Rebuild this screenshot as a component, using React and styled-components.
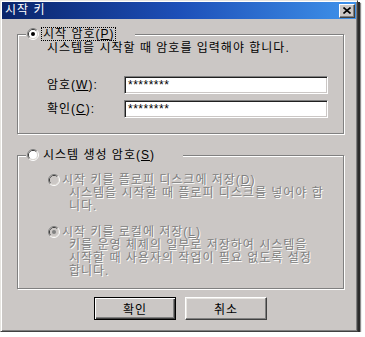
import React from 'react';
import styled, { createGlobalStyle } from 'styled-components';

const FACE = '#cbc7c5';
const FONT = '"Liberation Sans", "Noto Sans CJK KR", "Noto Sans", sans-serif';

const Global = createGlobalStyle`
  html, body { margin: 0; padding: 0; background: #ffffff; }
  body { font-family: ${FONT}; font-size: 12px; color: #000; letter-spacing: 1px; }
`;

const Window = styled.div`
  box-sizing: border-box;
  width: 358px;
  height: 332px;
  padding: 1px;
  background: ${FACE};
  border: 1px solid;
  border-color: #e6e4e0 #404040 #404040 #e6e4e0;
  box-shadow: inset 1px 1px #ffffff, inset -1px -1px #808080,
    2px 2px 0 #2b2b2b, 3px 3px 1px rgba(0, 0, 0, 0.45);
  display: flex;
  flex-direction: column;
`;

const TitleBar = styled.div`
  height: 17px;
  display: flex;
  align-items: center;
  justify-content: space-between;
  padding: 0 1px 0 3px;
  background: linear-gradient(to right, #0a246a 0%, #1d4fb8 50%, #3f92ea 100%);
`;

const TitleText = styled.span`
  color: #ffffff;
  font-size: 12px;
  line-height: 17px;
`;

const CloseButton = styled.div`
  box-sizing: border-box;
  width: 16px;
  height: 14px;
  background: ${FACE};
  border: 1px solid;
  border-color: #ffffff #404040 #404040 #ffffff;
  box-shadow: inset -1px -1px #808080;
  display: flex;
  align-items: center;
  justify-content: center;
`;

const Body = styled.div`
  flex: 1;
  display: flex;
  flex-direction: column;
  padding: 15px 12px 0 15px;
`;

const Group = styled.div`
  position: relative;
  border: 1px solid #808080;
  box-shadow: inset 1px 1px #ffffff, 1px 1px #ffffff;
  margin-top: ${(p) => p.$top || 0}px;
`;

const Legend = styled.div`
  position: absolute;
  top: -8px;
  left: 8px;
  width: ${(p) => p.$width}px;
  height: 14px;
  padding-left: 1px;
  box-sizing: border-box;
  background: ${FACE};
  display: flex;
  align-items: center;
`;

const LegendLabel = styled.span`
  margin-left: 2px;
  padding: 0 0 0 1px;
  line-height: 12px;
  border: 1px ${(p) => (p.$focus ? 'dotted #000' : 'solid transparent')};
  white-space: nowrap;
`;

const GroupContent = styled.div`
  padding: ${(p) => p.$pad};
`;

const Text = styled.div`
  line-height: ${(p) => p.$lh || 14}px;
  white-space: nowrap;
  margin-left: ${(p) => p.$indent || 0}px;
  color: ${(p) => (p.$disabled ? '#808080' : '#000')};
  text-shadow: ${(p) => (p.$disabled ? '1px 1px 0 #ffffff' : 'none')};
`;

const FieldGrid = styled.div`
  margin-top: 21px;
  display: grid;
  grid-template-columns: 77px 204px;
  row-gap: 6px;
  align-items: center;
`;

const FieldLabel = styled.span`
  line-height: 18px;
  white-space: nowrap;
`;

const Field = styled.div`
  box-sizing: border-box;
  height: 18px;
  background: #ffffff;
  border: 1px solid;
  border-color: #808080 #ffffff #ffffff #808080;
  box-shadow: inset 1px 1px #202020, inset -1px -1px ${FACE};
  padding: 0 3px;
  line-height: 17px;
  font-size: 12px;
  letter-spacing: 0.5px;
`;

const OptionRow = styled.div`
  height: 14px;
  display: flex;
  align-items: center;
  margin-top: ${(p) => p.$top || 0}px;
`;

const OptionLabel = styled.span`
  margin-left: 2px;
  line-height: 14px;
  white-space: nowrap;
  color: #808080;
  text-shadow: 1px 1px 0 #ffffff;
`;

const ButtonRow = styled.div`
  display: flex;
  justify-content: center;
  gap: 9px;
  margin-top: 8px;
`;

const Button = styled.div`
  box-sizing: border-box;
  width: 82px;
  height: 23px;
  display: flex;
  align-items: center;
  justify-content: center;
  background: ${FACE};
  font-size: 12px;
  border: 1px solid;
  border-color: ${(p) => (p.$default ? '#000 #000 #000 #000' : '#ffffff #404040 #404040 #ffffff')};
  box-shadow: ${(p) =>
    p.$default
      ? 'inset 1px 1px #ffffff, inset -1px -1px #404040, inset -2px -2px #808080'
      : 'inset -1px -1px #808080, inset 1px 1px #e8e6e2'};
`;

function Radio({ checked, disabled }) {
  const fill = disabled ? FACE : '#ffffff';
  const dot = disabled ? '#808080' : '#000000';
  return (
    <svg width="12" height="12" viewBox="0 0 12 12" style={{ flex: 'none' }}>
      <path d="M2.11 9.89 A5.5 5.5 0 0 1 9.89 2.11" fill="none" stroke="#808080" strokeWidth="1" />
      <path d="M9.89 2.11 A5.5 5.5 0 0 1 2.11 9.89" fill="none" stroke="#ffffff" strokeWidth="1" />
      <path d="M2.82 9.18 A4.5 4.5 0 0 1 9.18 2.82" fill="none" stroke="#404040" strokeWidth="1" />
      <path d="M9.18 2.82 A4.5 4.5 0 0 1 2.82 9.18" fill="none" stroke="#dcd8d2" strokeWidth="1" />
      <circle cx="6" cy="6" r="4" fill={fill} />
      {checked && <circle cx="6" cy="6" r="2" fill={dot} />}
    </svg>
  );
}

export default function App() {
  return (
    <>
      <Global />
      <Window>
        <TitleBar>
          <TitleText>시작 키</TitleText>
          <CloseButton>
            <svg width="8" height="7" viewBox="0 0 8 7">
              <path d="M0.5 0.5 L7.5 6.5 M7.5 0.5 L0.5 6.5" stroke="#000" strokeWidth="1.6" fill="none" />
            </svg>
          </CloseButton>
        </TitleBar>
        <Body>
          <Group>
            <Legend $width={109}>
              <Radio checked />
              <LegendLabel $focus>
                시작 암호(<u>P</u>)
              </LegendLabel>
            </Legend>
            <GroupContent $pad="6px 14px 15px 29px">
              <Text>시스템을 시작할 때 암호를 입력해야 합니다.</Text>
              <FieldGrid>
                <FieldLabel>
                  암호(<u>W</u>):
                </FieldLabel>
                <Field>********</Field>
                <FieldLabel>
                  확인(<u>C</u>):
                </FieldLabel>
                <Field>********</Field>
              </FieldGrid>
            </GroupContent>
          </Group>

          <Group $top={21}>
            <Legend $width={157}>
              <Radio />
              <LegendLabel>
                시스템 생성 암호(<u>S</u>)
              </LegendLabel>
            </Legend>
            <GroupContent $pad="17px 14px 10px 30px">
              <OptionRow>
                <Radio disabled />
                <OptionLabel>
                  시작 키를 플로피 디스크에 저장(<u>D</u>)
                </OptionLabel>
              </OptionRow>
              <Text $disabled $lh={13} $indent={21}>
                시스템을 시작할 때 플로피 디스크를 넣어야 합
              </Text>
              <Text $disabled $lh={13} $indent={21}>
                니다.
              </Text>
              <OptionRow $top={12}>
                <Radio checked disabled />
                <OptionLabel>
                  시작 키를 로컬에 저장(<u>L</u>)
                </OptionLabel>
              </OptionRow>
              <Text $disabled $lh={13} $indent={21}>
                키를 운영 체제의 일부로 저장하여 시스템을
              </Text>
              <Text $disabled $lh={13} $indent={21}>
                시작할 때 사용자의 작업이 필요 없도록 설정
              </Text>
              <Text $disabled $lh={13} $indent={21}>
                합니다.
              </Text>
            </GroupContent>
          </Group>

          <ButtonRow>
            <Button $default>확인</Button>
            <Button>취소</Button>
          </ButtonRow>
        </Body>
      </Window>
    </>
  );
}
